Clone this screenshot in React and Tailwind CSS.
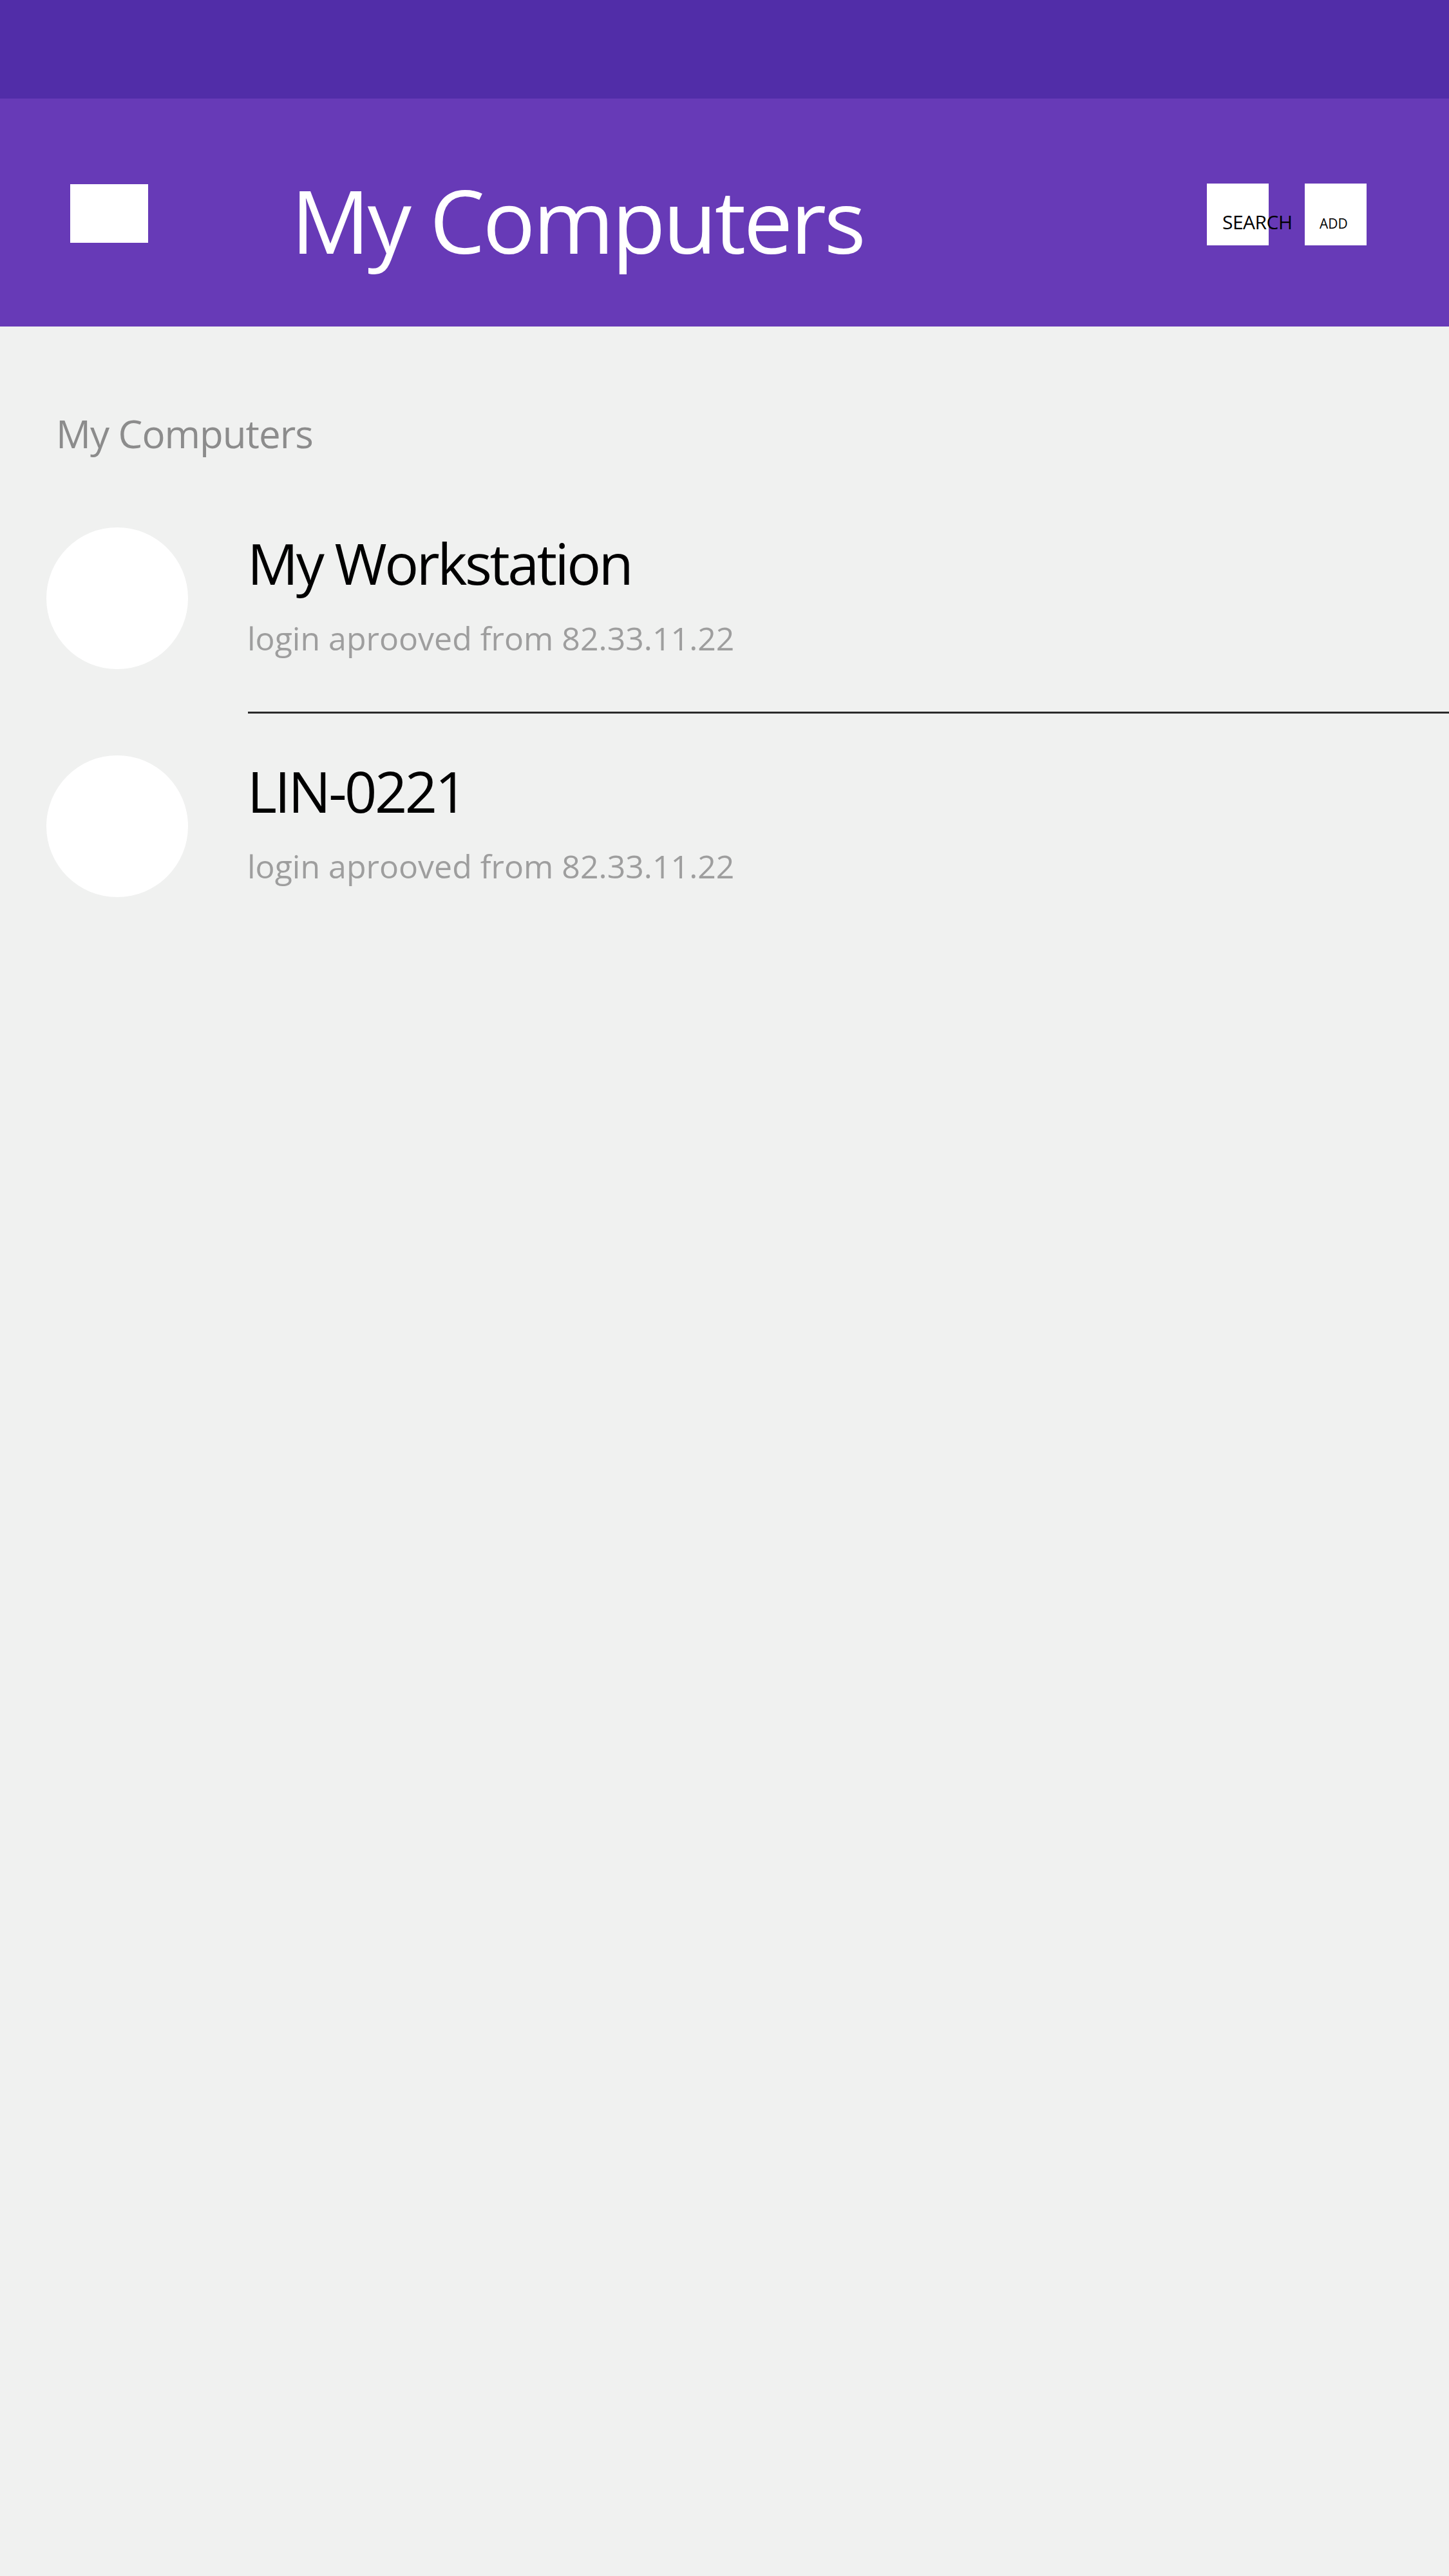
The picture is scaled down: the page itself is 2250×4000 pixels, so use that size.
import React from "react";

const computers = [
  { id: 1, name: "My Workstation", status: "login aprooved from 82.33.11.22" },
  { id: 2, name: "LIN-0221", status: "login aprooved from 82.33.11.22" },
];

function HeaderButton({ label, size }) {
  return (
    <div
      className={`w-[96px] h-[96px] bg-white whitespace-nowrap leading-none text-black ${
        size === "lg" ? "pl-[24px] pt-[45px] text-[30px] tracking-[-0.5px]" : "pl-[23px] pt-[52px] text-[21px]"
      }`}
    >
      {label}
    </div>
  );
}

function ComputerRow({ item }) {
  return (
    <div className="flex items-start">
      <div className="ml-[72px] w-[220px] h-[220px] rounded-full bg-white shrink-0" />
      <div className="ml-[92px] flex flex-col">
        <div className="mt-[11px] text-[88px] leading-none text-black tracking-[-3.5px]">
          {item.name}
        </div>
        <div className="mt-[48px] text-[50px] leading-none text-[#9e9e9e]">
          {item.status}
        </div>
      </div>
    </div>
  );
}

export default function App() {
  return (
    <div
      className="w-[2250px] h-[4000px] bg-[#f0f1f0] overflow-hidden"
      style={{ fontFamily: '"Open Sans", "Noto Sans", sans-serif' }}
    >
      {/* status bar */}
      <div className="h-[153px] bg-[#512da8]" />

      {/* app bar */}
      <div className="h-[354px] bg-[#673ab7] flex items-start">
        <div className="ml-[109px] mt-[133px] w-[121px] h-[91px] bg-white shrink-0" />
        <h1 className="ml-[222px] mt-[121px] text-[136px] leading-none text-white tracking-[-3.5px]">
          My Computers
        </h1>
        <div className="ml-auto mr-[128px] mt-[132px] flex gap-[56px]">
          <HeaderButton label="SEARCH" size="lg" />
          <HeaderButton label="ADD" size="sm" />
        </div>
      </div>

      {/* list */}
      <div className="pt-[136px]">
        <div className="ml-[87px] text-[60px] leading-none text-[#8c8c8c] tracking-[-1px]">
          My Computers
        </div>
        <div className="mt-[116px]">
          <ComputerRow item={computers[0]} />
          <div className="mt-[66px] ml-[385px] h-[3px] bg-[#2b2b2b]" />
          <div className="mt-[65px]">
            <ComputerRow item={computers[1]} />
          </div>
        </div>
      </div>
    </div>
  );
}
